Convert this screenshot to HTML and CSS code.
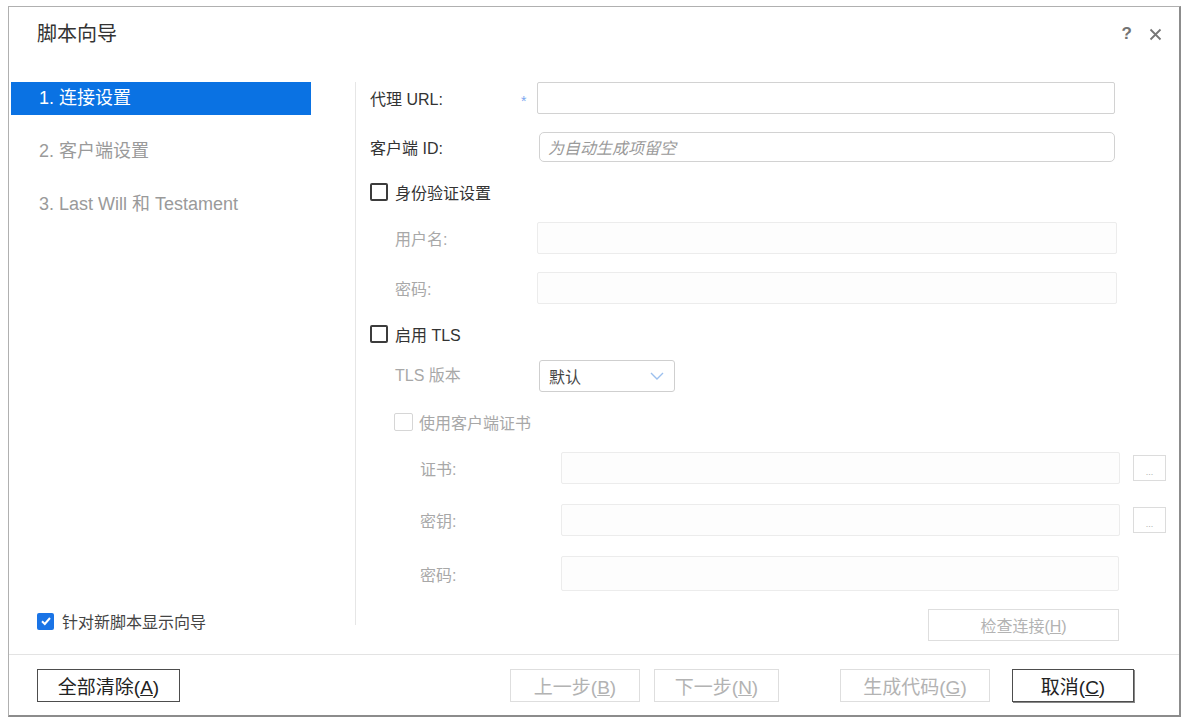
FILE: index.html
```html
<!DOCTYPE html>
<html lang="zh-CN">
<head>
    <meta charset="UTF-8">
    <title>脚本向导</title>
    <link rel="stylesheet" href="styles.css">
</head>
<body>
    <div class="dialog">
        <div class="header">
            <div class="title">脚本向导</div>
            <div class="header-actions">
                <span class="help">?</span>
                <svg class="close" width="13" height="13" viewBox="0 0 13 13"><path d="M1.5 1.5 L11.5 11.5 M11.5 1.5 L1.5 11.5" stroke="#767676" stroke-width="1.8"/></svg>
            </div>
        </div>

        <div class="body">
            <div class="sidebar">
                <div class="nav-item active">1. 连接设置</div>
                <div class="nav-item">2. 客户端设置</div>
                <div class="nav-item">3. Last Will 和 Testament</div>

                <label class="show-wizard">
                    <span class="check checked">
                        <svg width="12" height="12" viewBox="0 0 12 12"><path d="M2 6.2 L4.8 9 L10 3" fill="none" stroke="#fff" stroke-width="2"/></svg>
                    </span>
                    <span>针对新脚本显示向导</span>
                </label>
            </div>

            <div class="divider"></div>

            <div class="form">
                <div class="row row-main">
                    <span class="label">代理 URL:</span>
                    <span class="required">*</span>
                    <div class="input"></div>
                </div>

                <div class="row row-main">
                    <span class="label">客户端 ID:</span>
                    <span class="required"></span>
                    <div class="input rounded"><span class="placeholder">为自动生成项留空</span></div>
                </div>

                <div class="row row-check">
                    <span class="check"></span>
                    <span class="check-text">身份验证设置</span>
                </div>

                <div class="row row-sub">
                    <span class="label muted">用户名:</span>
                    <div class="input disabled wide"></div>
                </div>

                <div class="row row-sub">
                    <span class="label muted">密码:</span>
                    <div class="input disabled wide"></div>
                </div>

                <div class="row row-check">
                    <span class="check"></span>
                    <span class="check-text">启用 TLS</span>
                </div>

                <div class="row row-sub row-select">
                    <span class="label muted">TLS 版本</span>
                    <div class="select">
                        <span>默认</span>
                        <svg width="14" height="9" viewBox="0 0 14 9"><path d="M1 1 L7 7 L13 1" fill="none" stroke="#9cc0ee" stroke-width="1.4"/></svg>
                    </div>
                </div>

                <div class="row row-check row-check-sub">
                    <span class="check light"></span>
                    <span class="check-text muted">使用客户端证书</span>
                </div>

                <div class="row row-deep">
                    <span class="label muted">证书:</span>
                    <div class="input disabled"></div>
                    <button class="browse">...</button>
                </div>

                <div class="row row-deep">
                    <span class="label muted">密钥:</span>
                    <div class="input disabled"></div>
                    <button class="browse">...</button>
                </div>

                <div class="row row-deep row-tall">
                    <span class="label muted">密码:</span>
                    <div class="input disabled wide"></div>
                </div>

                <div class="row row-test">
                    <button class="btn disabled test">检查连接(<u>H</u>)</button>
                </div>
            </div>
        </div>

        <div class="footer">
            <button class="btn clear">全部清除(<u>A</u>)</button>
            <div class="spacer"></div>
            <button class="btn disabled prev">上一步(<u>B</u>)</button>
            <button class="btn disabled next">下一步(<u>N</u>)</button>
            <button class="btn disabled generate">生成代码(<u>G</u>)</button>
            <button class="btn cancel">取消(<u>C</u>)</button>
        </div>
    </div>
</body>
</html>
```

FILE: styles.css
```css
:root {
    --blue: #0a72e3;
    --text: #333333;
    --muted: #a8a8a8;
    --line: #e6e6e6;
}

* {
    box-sizing: border-box;
}

body {
    margin: 0;
    background: #ffffff;
    font-family: "Liberation Sans", "Noto Sans CJK SC", sans-serif;
    color: var(--text);
}

.dialog {
    margin: 6px 0 0 8px;
    width: 1173px;
    height: 711px;
    border: 1px solid #b0b0b0;
    border-right: 2px solid #8c8c8c;
    border-bottom: 2px solid #8c8c8c;
    display: flex;
    flex-direction: column;
}

/* Header */
.header {
    height: 75px;
    flex: none;
    display: flex;
    justify-content: space-between;
    padding: 15px 17px 0 28px;
}

.title {
    font-size: 20px;
    line-height: 24px;
}

.header-actions {
    display: flex;
    align-items: center;
    gap: 17px;
    height: 24px;
    color: #737373;
    font-size: 17px;
    font-weight: bold;
}

/* Body */
.body {
    flex: 1;
    display: flex;
    min-height: 0;
}

.sidebar {
    width: 300px;
    margin-left: 2px;
    display: flex;
    flex-direction: column;
    padding-bottom: 21px;
}

.nav-item {
    height: 33px;
    line-height: 33px;
    margin-bottom: 20px;
    padding-left: 28px;
    font-size: 18px;
    color: #9a9a9a;
}

.nav-item.active {
    background: var(--blue);
    color: #ffffff;
}

.show-wizard {
    margin-top: auto;
    margin-left: 26px;
    display: flex;
    align-items: center;
    gap: 8px;
    font-size: 16px;
    color: #444;
}

.divider {
    width: 1px;
    height: 543px;
    margin-left: 44px;
    background: var(--line);
}

.form {
    flex: 1;
    padding: 0 13px 0 14px;
    display: flex;
    flex-direction: column;
    gap: 18px;
}

.row {
    display: flex;
    align-items: center;
    height: 32px;
    font-size: 16px;
}

.label {
    flex: none;
    width: 147px;
}

.muted {
    color: var(--muted);
}

.required {
    width: 20px;
    color: #7aa7ef;
    font-size: 14px;
    padding-left: 4px;
    padding-top: 6px;
}

.input {
    flex: 1;
    height: 100%;
    border: 1px solid #d2d2d2;
    border-radius: 2px;
    margin-right: 51px;
    background: #ffffff;
    display: flex;
    align-items: center;
}

.input.rounded {
    border-radius: 5px;
    margin-left: 2px;
}

.row-main + .row-main {
    height: 30px;
}

.placeholder {
    font-style: italic;
    color: #9a9a9a;
    padding-left: 8px;
}

.input.disabled {
    border-color: #ececec;
    background: #fdfdfd;
}

.input.wide {
    margin-right: 49px;
}

.row-check {
    height: 24px;
}

.check {
    width: 18px;
    height: 18px;
    border: 2px solid #3c3c3c;
    border-radius: 2px;
    flex: none;
    display: flex;
    align-items: center;
    justify-content: center;
}

.check.checked {
    width: 17px;
    height: 17px;
    border: none;
    background: #1a74e6;
}

.check.light {
    width: 19px;
    height: 18px;
    border: 1px solid #d6d6d6;
}

.check-text {
    margin-left: 7px;
}

.row-sub {
    padding-left: 25px;
}

.row-sub .label {
    width: 142px;
}

.row-select {
    height: 32px;
    margin-top: -4px;
}

.row-select .label {
    width: 144px;
    margin-top: -4px;
}

.select {
    width: 136px;
    height: 100%;
    border: 1px solid #cfcfcf;
    border-radius: 3px;
    display: flex;
    align-items: center;
    justify-content: space-between;
    padding: 0 10px 0 9px;
    color: #444;
}

.row-check-sub {
    padding-left: 24px;
}

.row-check-sub .check-text {
    margin-left: 6px;
}

.row-deep {
    padding-left: 50px;
}

.row-deep + .row-deep {
    margin-top: 2px;
}

.row-deep .label {
    width: 141px;
}

.row-deep .input {
    margin-right: 13px;
}

.row-deep .input.wide {
    margin-right: 47px;
}

.row-tall {
    height: 35px;
}

.browse {
    width: 33px;
    height: 26px;
    border: 1px solid #dcdcdc;
    background: #ffffff;
    color: #b0b0b0;
    font-size: 9px;
    padding: 8px 0 0;
    font-family: inherit;
}

.row-test {
    justify-content: flex-end;
    padding-right: 47px;
}

/* Buttons */
.btn {
    height: 33px;
    background: #ffffff;
    border: 1px solid #4d4d4d;
    font-family: inherit;
    font-size: 19px;
    color: #222;
    padding: 0;
}

.btn.disabled {
    border-color: #dedede;
    color: #b3b3b3;
}

.test {
    width: 191px;
    height: 32px;
    font-size: 16px;
}

.footer {
    height: 61px;
    flex: none;
    border-top: 1px solid #e3e3e3;
    display: flex;
    align-items: flex-start;
    padding: 14px 0 0 28px;
}

.spacer {
    flex: 1;
}

.clear {
    width: 143px;
}

.prev {
    width: 130px;
}

.next {
    width: 125px;
    margin-left: 14px;
}

.generate {
    width: 150px;
    margin-left: 61px;
}

.cancel {
    width: 122px;
    margin-left: 22px;
    margin-right: 45px;
    box-shadow: 1px 1px 0 #888;
}
```
